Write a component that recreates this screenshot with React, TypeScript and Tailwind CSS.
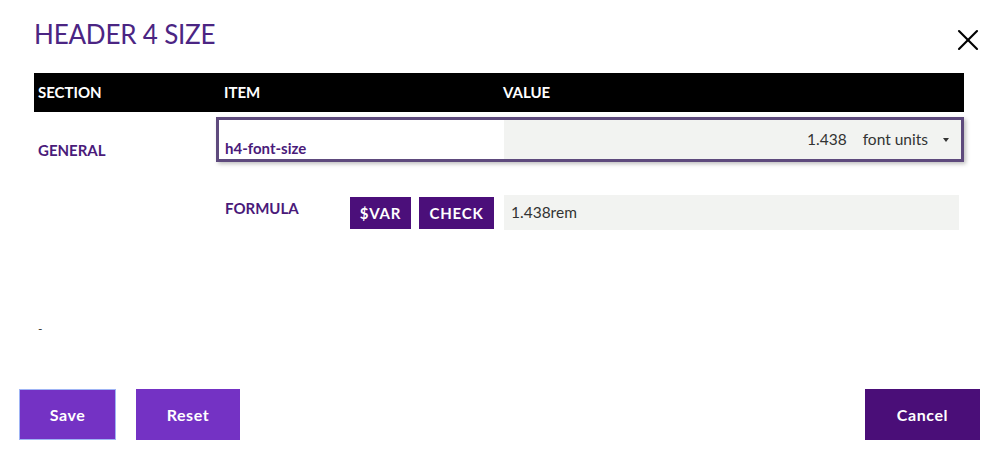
import { X } from "lucide-react";

export default function App() {
  return (
    <div
      className="relative w-[999px] h-[460px] bg-white flex flex-col"
      style={{ fontFamily: "Lato, 'Open Sans', sans-serif" }}
    >
      {/* title */}
      <div className="flex items-start justify-between pl-[34px] pr-[13px] pt-[17px] h-[73px]">
        <h1 className="text-[26px] leading-[34px] text-[#4b2583] tracking-[-0.2px]">HEADER 4 SIZE</h1>
        <button className="mt-[5px] text-black">
          <X size={36} strokeWidth={1.4} />
        </button>
      </div>

      {/* table */}
      <div className="mx-[34px] w-[930px]">
        <div className="grid grid-cols-[182px_284px_1fr] h-[39px] items-center bg-black text-white text-[15px] font-bold">
          <div className="pl-[4px]">SECTION</div>
          <div className="pl-[8px]">ITEM</div>
          <div className="pl-[3px]">VALUE</div>
        </div>

        <div className="grid grid-cols-[182px_1fr] mt-[5px]">
          <div className="pl-[4px] pt-[22px] text-[15px] font-bold text-[#4a1a7a]">GENERAL</div>
          <div className="flex h-[45px] border-[3px] border-[#5e4a7d] shadow-[2px_2px_4px_rgba(0,0,0,0.25)]">
            <div className="w-[285px] flex items-end pb-[0px] pl-[6px] text-[15px] font-bold text-[#4a1a7a] bg-white">
              h4-font-size
            </div>
            <div className="flex-1 bg-[#f2f3f1] flex items-center justify-end text-[15.5px] text-[#333] pr-[12px]">
              <span>1.438</span>
              <span className="ml-[16px]">font units</span>
              <span className="ml-[15px] w-0 h-0 border-l-[3px] border-r-[3px] border-t-[4px] border-l-transparent border-r-transparent border-t-[#333]" />
            </div>
          </div>
        </div>

        <div className="grid grid-cols-[182px_134px_154px_1fr] mt-[33px] items-start">
          <div />
          <div className="pl-[9px] pt-[2px] text-[15px] font-bold text-[#4a1a7a]">FORMULA</div>
          <div className="flex gap-[8px] pt-[2px]">
            <button className="h-[32px] w-[61px] bg-[#4b0f7a] text-white text-[15px] font-bold tracking-[0.8px]">$VAR</button>
            <button className="h-[32px] w-[75px] bg-[#4b0f7a] text-white text-[15px] font-bold tracking-[0.8px]">CHECK</button>
          </div>
          <div className="h-[35px] w-[455px] bg-[#f2f3f1] flex items-center pl-[7px] text-[15.5px] text-[#333]">1.438rem</div>
        </div>

        <div className="pl-[4px] mt-[90px] text-[12px] text-[#333]">-</div>
      </div>

      {/* footer */}
      <div className="flex items-center justify-between px-[19px] mt-auto mb-[20px]">
        <div className="flex gap-[20px]">
          <button className="w-[97px] h-[51px] bg-[#7432c4] border border-[#9fb4f5] text-white text-[16px] font-bold tracking-[0.6px]">Save</button>
          <button className="w-[104px] h-[51px] bg-[#7432c4] text-white text-[16px] font-bold tracking-[0.6px]">Reset</button>
        </div>
        <button className="w-[115px] h-[51px] bg-[#4a0e78] text-white text-[16px] font-bold tracking-[0.6px]">Cancel</button>
      </div>
    </div>
  );
}
